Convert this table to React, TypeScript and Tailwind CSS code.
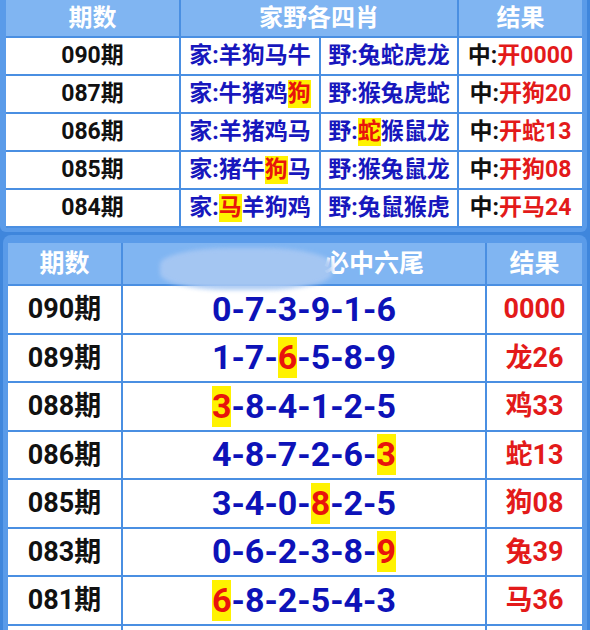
import React from "react";

const FONT = { fontFamily: 'Roboto, "Noto Sans CJK SC", "Noto Sans", sans-serif' };

type Seg = { t: string; hl?: boolean };

const HL = ({ t }: { t: string }) => (
  <span className="bg-[#fff200] text-[#e8140c] leading-[1.2]">{t}</span>
);

function renderSegs(segs: Seg[]) {
  return segs.map((s, i) => (s.hl ? <HL key={i} t={s.t} /> : <span key={i}>{s.t}</span>));
}

const top = [
  { q: "090期", a: [{ t: "家:羊狗马牛" }], b: [{ t: "野:兔蛇虎龙" }], r: "开0000" },
  { q: "087期", a: [{ t: "家:牛猪鸡" }, { t: "狗", hl: true }], b: [{ t: "野:猴兔虎蛇" }], r: "开狗20" },
  { q: "086期", a: [{ t: "家:羊猪鸡马" }], b: [{ t: "野:" }, { t: "蛇", hl: true }, { t: "猴鼠龙" }], r: "开蛇13" },
  { q: "085期", a: [{ t: "家:猪牛" }, { t: "狗", hl: true }, { t: "马" }], b: [{ t: "野:猴兔鼠龙" }], r: "开狗08" },
  { q: "084期", a: [{ t: "家:" }, { t: "马", hl: true }, { t: "羊狗鸡" }], b: [{ t: "野:兔鼠猴虎" }], r: "开马24" },
];

const bottom = [
  { q: "090期", n: [{ t: "0-7-3-9-1-6" }], r: "0000" },
  { q: "089期", n: [{ t: "1-7-" }, { t: "6", hl: true }, { t: "-5-8-9" }], r: "龙26" },
  { q: "088期", n: [{ t: "3", hl: true }, { t: "-8-4-1-2-5" }], r: "鸡33" },
  { q: "086期", n: [{ t: "4-8-7-2-6-" }, { t: "3", hl: true }], r: "蛇13" },
  { q: "085期", n: [{ t: "3-4-0-" }, { t: "8", hl: true }, { t: "-2-5" }], r: "狗08" },
  { q: "083期", n: [{ t: "0-6-2-3-8-" }, { t: "9", hl: true }], r: "兔39" },
  { q: "081期", n: [{ t: "6", hl: true }, { t: "-8-2-5-4-3" }], r: "马36" },
];

export default function App() {
  return (
    <div className="w-[590px] h-[630px] overflow-hidden bg-[#3f86dc]" style={FONT}>
      {/* top panel */}
      <div className="w-[587px] pl-[6px] pr-[5px] pb-[4px] rounded-b-[6px] bg-[#5a9be9]">
        <div className="grid grid-cols-[173px_138px_136px_123px] gap-[2px] pb-[2px] bg-[#4a8fe2] font-bold">
          <div className="h-[36px] bg-[#80b5f2] text-white text-[24px] flex items-center justify-center">期数</div>
          <div className="col-span-2 h-[36px] bg-[#80b5f2] text-white text-[24px] flex items-center justify-center">家野各四肖</div>
          <div className="h-[36px] bg-[#80b5f2] text-white text-[24px] flex items-center justify-center">结果</div>
          {top.map((row) => (
            <React.Fragment key={row.q}>
              <div className="h-[36px] bg-white text-[#111] text-[23px] flex items-center justify-center">{row.q}</div>
              <div className="h-[36px] bg-white text-[#1717bd] text-[23px] flex items-center justify-center whitespace-nowrap">{renderSegs(row.a)}</div>
              <div className="h-[36px] bg-white text-[#1717bd] text-[23px] flex items-center justify-center whitespace-nowrap">{renderSegs(row.b)}</div>
              <div className="h-[36px] bg-white text-[23px] flex items-center justify-center whitespace-nowrap">
                <span className="text-[#111]">中:</span>
                <span className="text-[#e31a1a]">{row.r}</span>
              </div>
            </React.Fragment>
          ))}
        </div>
      </div>

      {/* bottom panel */}
      <div className="relative mt-[3px] ml-[3px] w-[584px] rounded-t-[8px] bg-[#5a9be9] pt-[8px] pl-[5px] pr-[5px]">
        <div className="grid grid-cols-[113px_362px_95px] gap-[2px] bg-[#4a8fe2] font-bold">
          <div className="h-[41px] bg-[#80b5f2] text-white text-[25px] flex items-center justify-center">期数</div>
          <div className="h-[41px] bg-[#80b5f2] text-white text-[25px] flex items-center pl-[201px]">必中六尾</div>
          <div className="h-[41px] bg-[#80b5f2] text-white text-[25px] flex items-center justify-center">结果</div>
          {bottom.map((row) => (
            <React.Fragment key={row.q}>
              <div className="h-[46.5px] bg-white text-[#111] text-[27px] flex items-center justify-center">{row.q}</div>
              <div className="h-[46.5px] bg-white text-[#0d12b8] text-[34px] flex items-center justify-center whitespace-nowrap">{renderSegs(row.n)}</div>
              <div className="h-[46.5px] bg-white text-[#e31a1a] text-[27px] flex items-center justify-center">{row.r}</div>
            </React.Fragment>
          ))}
          <div className="h-[40px] bg-white" />
          <div className="h-[40px] bg-white" />
          <div className="h-[40px] bg-white" />
        </div>
        {/* blurred blob covering part of header */}
        <div className="absolute left-[157px] top-[13px] w-[172px] h-[42px] rounded-[40%] bg-[#a8c8f3] opacity-90 blur-[2px]" />
      </div>
    </div>
  );
}
